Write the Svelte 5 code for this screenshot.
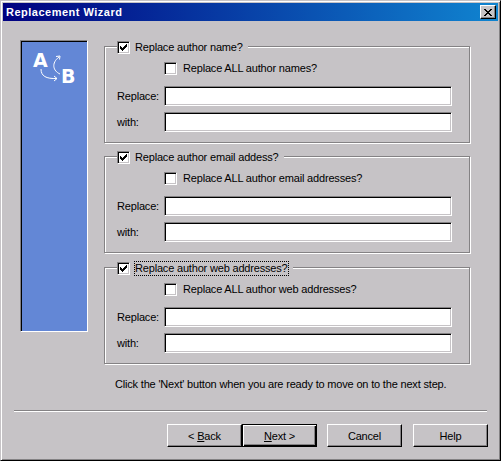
<script lang="ts">
  const groups = [
    { title: 'Replace author name?', all: 'Replace ALL author names?' },
    { title: 'Replace author email addess?', all: 'Replace ALL author email addresses?' },
    { title: 'Replace author web addresses?', all: 'Replace ALL author web addresses?', focused: true }
  ];
</script>

{#snippet checkbox(checked: boolean)}
  <span class="check">
    {#if checked}
      <svg width="9" height="9" viewBox="0 0 9 9" shape-rendering="crispEdges">
        <path d="M1.5 3v3M2.5 4v3M3.5 5v3M4.5 4v3M5.5 3v3M6.5 2v3M7.5 1v3" stroke="#000" fill="none" />
      </svg>
    {/if}
  </span>
{/snippet}

<div class="window">
  <header class="titlebar">
    <span class="title">Replacement Wizard</span>
    <button class="close" aria-label="Close">
      <svg width="8" height="7" viewBox="0 0 8 7" shape-rendering="crispEdges">
        <path d="M0 .5h2M6 .5h2M1 1.500h2M5 1.500h2M2 2.500h4M3 3.500h2M2 4.500h4M1 5.500h2M5 5.500h2M0 6.500h2M6 6.500h2" stroke="#000" fill="none" />
      </svg>
    </button>
  </header>

  <main class="body">
    <aside class="side">
      <svg width="66" height="60" viewBox="0 0 66 60" class="logo">
        <text x="12" y="26" class="letter">A</text>
        <text x="40" y="42" class="letter">B</text>
        <g fill="none" stroke="#fff" stroke-width="1">
          <path d="M20 28c0 7 5 10 16 9.500" />
          <path d="M33 35l3 2.500-3 2.500" />
          <path d="M39 33c-7-3-9-11-1-17" />
          <path d="M35 15.500l4-.5-.5 3.500" />
        </g>
      </svg>
    </aside>

    <section class="groups">
      {#each groups as g}
        <div class="group">
          <div class="legend">
            {@render checkbox(true)}
            <span class="legend-text" class:focused={g.focused}>{g.title}</span>
          </div>
          <div class="all">
            {@render checkbox(false)}
            <span>{g.all}</span>
          </div>
          <div class="fields">
            <span>Replace:</span>
            <input type="text" />
            <span>with:</span>
            <input type="text" />
          </div>
        </div>
      {/each}
      <p class="hint">Click the 'Next' button when you are ready to move on to the next step.</p>
    </section>
  </main>

  <div class="separator"></div>

  <footer class="buttons">
    <button>&lt; <u>B</u>ack</button>
    <button class="default"><u>N</u>ext &gt;</button>
    <button class="spaced">Cancel</button>
    <button class="spaced wide">Help</button>
  </footer>
</div>

<style>
  :global(body) {
    margin: 0;
    background: #c6c3c6;
  }

  .window {
    box-sizing: border-box;
    width: 501px;
    height: 461px;
    display: flex;
    flex-direction: column;
    background: #c6c3c6;
    border: 1px solid;
    border-color: #c6c3c6 #000 #000 #c6c3c6;
    box-shadow: inset 1px 1px 0 #fff, inset -1px -1px 0 #848284;
    font: 11px "Liberation Sans", Arial, sans-serif;
    letter-spacing: -0.18px;
    color: #000;
    padding: 2px;
  }

  .titlebar {
    height: 18px;
    flex: none;
    display: flex;
    align-items: center;
    justify-content: space-between;
    padding: 0 2px 0 3px;
    background: linear-gradient(to right, #000080, #1084d0);
  }

  .title {
    color: #fff;
    font-weight: bold;
    letter-spacing: 0.5px;
  }

  .close {
    box-sizing: border-box;
    width: 16px;
    height: 14px;
    padding: 0;
    display: flex;
    align-items: center;
    justify-content: center;
    background: #c6c3c6;
    border: 1px solid;
    border-color: #fff #000 #000 #fff;
    box-shadow: inset -1px -1px 0 #848284;
  }

  .body {
    flex: none;
    display: flex;
    gap: 16px;
    padding: 19px 28px 0 17px;
  }

  .side {
    box-sizing: border-box;
    width: 68px;
    height: 292px;
    background: #6387d6;
    border: 1px solid;
    border-color: #848284 #fff #fff #848284;
    box-shadow: inset 1px 1px 0 #000;
  }

  .logo {
    display: block;
  }

  .letter {
    font: bold 19px "DejaVu Sans", sans-serif;
    letter-spacing: 0;
    fill: #fff;
  }

  .groups {
    flex: 1;
    min-width: 0;
    padding-top: 6px;
  }

  .group {
    box-sizing: border-box;
    height: 97px;
    margin-bottom: 13px;
    padding: 0 0 0 12px;
    border: 1px solid #848284;
    box-shadow: inset 1px 1px 0 #fff, 1px 1px 0 #fff;
  }

  .group:nth-child(2) {
    margin-bottom: 14px;
  }

  .legend {
    display: flex;
    align-items: center;
    width: max-content;
    height: 15px;
    margin-top: -7px;
    padding: 0 4px 0 0;
    gap: 4px;
    background: #c6c3c6;
  }

  .legend-text {
    height: 15px;
    line-height: 13px;
    box-sizing: border-box;
    border: 1px dotted transparent;
  }

  .legend-text.focused {
    border-color: #000;
  }

  .check {
    box-sizing: border-box;
    flex: none;
    width: 13px;
    height: 13px;
    display: flex;
    align-items: center;
    justify-content: center;
    background: #fff;
    border: 1px solid;
    border-color: #848284 #fff #fff #848284;
    box-shadow: inset 1px 1px 0 #000, inset -1px -1px 0 #c6c3c6;
  }

  .all {
    display: flex;
    align-items: center;
    gap: 6px;
    height: 13px;
    margin: 7px 0 0 47px;
  }

  .all span:last-child {
    line-height: 11px;
  }

  .fields {
    display: grid;
    grid-template-columns: 47px 288px;
    row-gap: 6px;
    align-items: center;
    margin-top: 11px;
  }

  input {
    box-sizing: border-box;
    width: 288px;
    height: 20px;
    padding: 0;
    background: #fff;
    border: 1px solid;
    border-color: #848284 #fff #fff #848284;
    box-shadow: inset 1px 1px 0 #000, inset -1px -1px 0 #c6c3c6;
    outline: none;
  }

  .hint {
    margin: 14px 0 0 11px;
    white-space: nowrap;
  }

  .separator {
    flex: none;
    height: 1px;
    margin: auto 11px 0 11px;
    background: #848284;
    box-shadow: 0 1px 0 #fff;
  }

  .buttons {
    flex: none;
    display: flex;
    justify-content: flex-end;
    padding: 13px 10px 11px 0;
  }

  button {
    font: inherit;
    color: #000;
  }

  .buttons button {
    box-sizing: border-box;
    width: 75px;
    height: 23px;
    padding: 0;
    background: #c6c3c6;
    border: 1px solid;
    border-color: #fff #000 #000 #fff;
    box-shadow: inset -1px -1px 0 #848284;
    letter-spacing: inherit;
  }

  .buttons .default {
    border-color: #000;
    box-shadow: inset 1px 1px 0 #fff, inset -1px -1px 0 #000, inset -2px -2px 0 #848284;
  }

  .buttons .spaced {
    margin-left: 10px;
  }

  .buttons .wide {
    margin-left: 11px;
  }
</style>
